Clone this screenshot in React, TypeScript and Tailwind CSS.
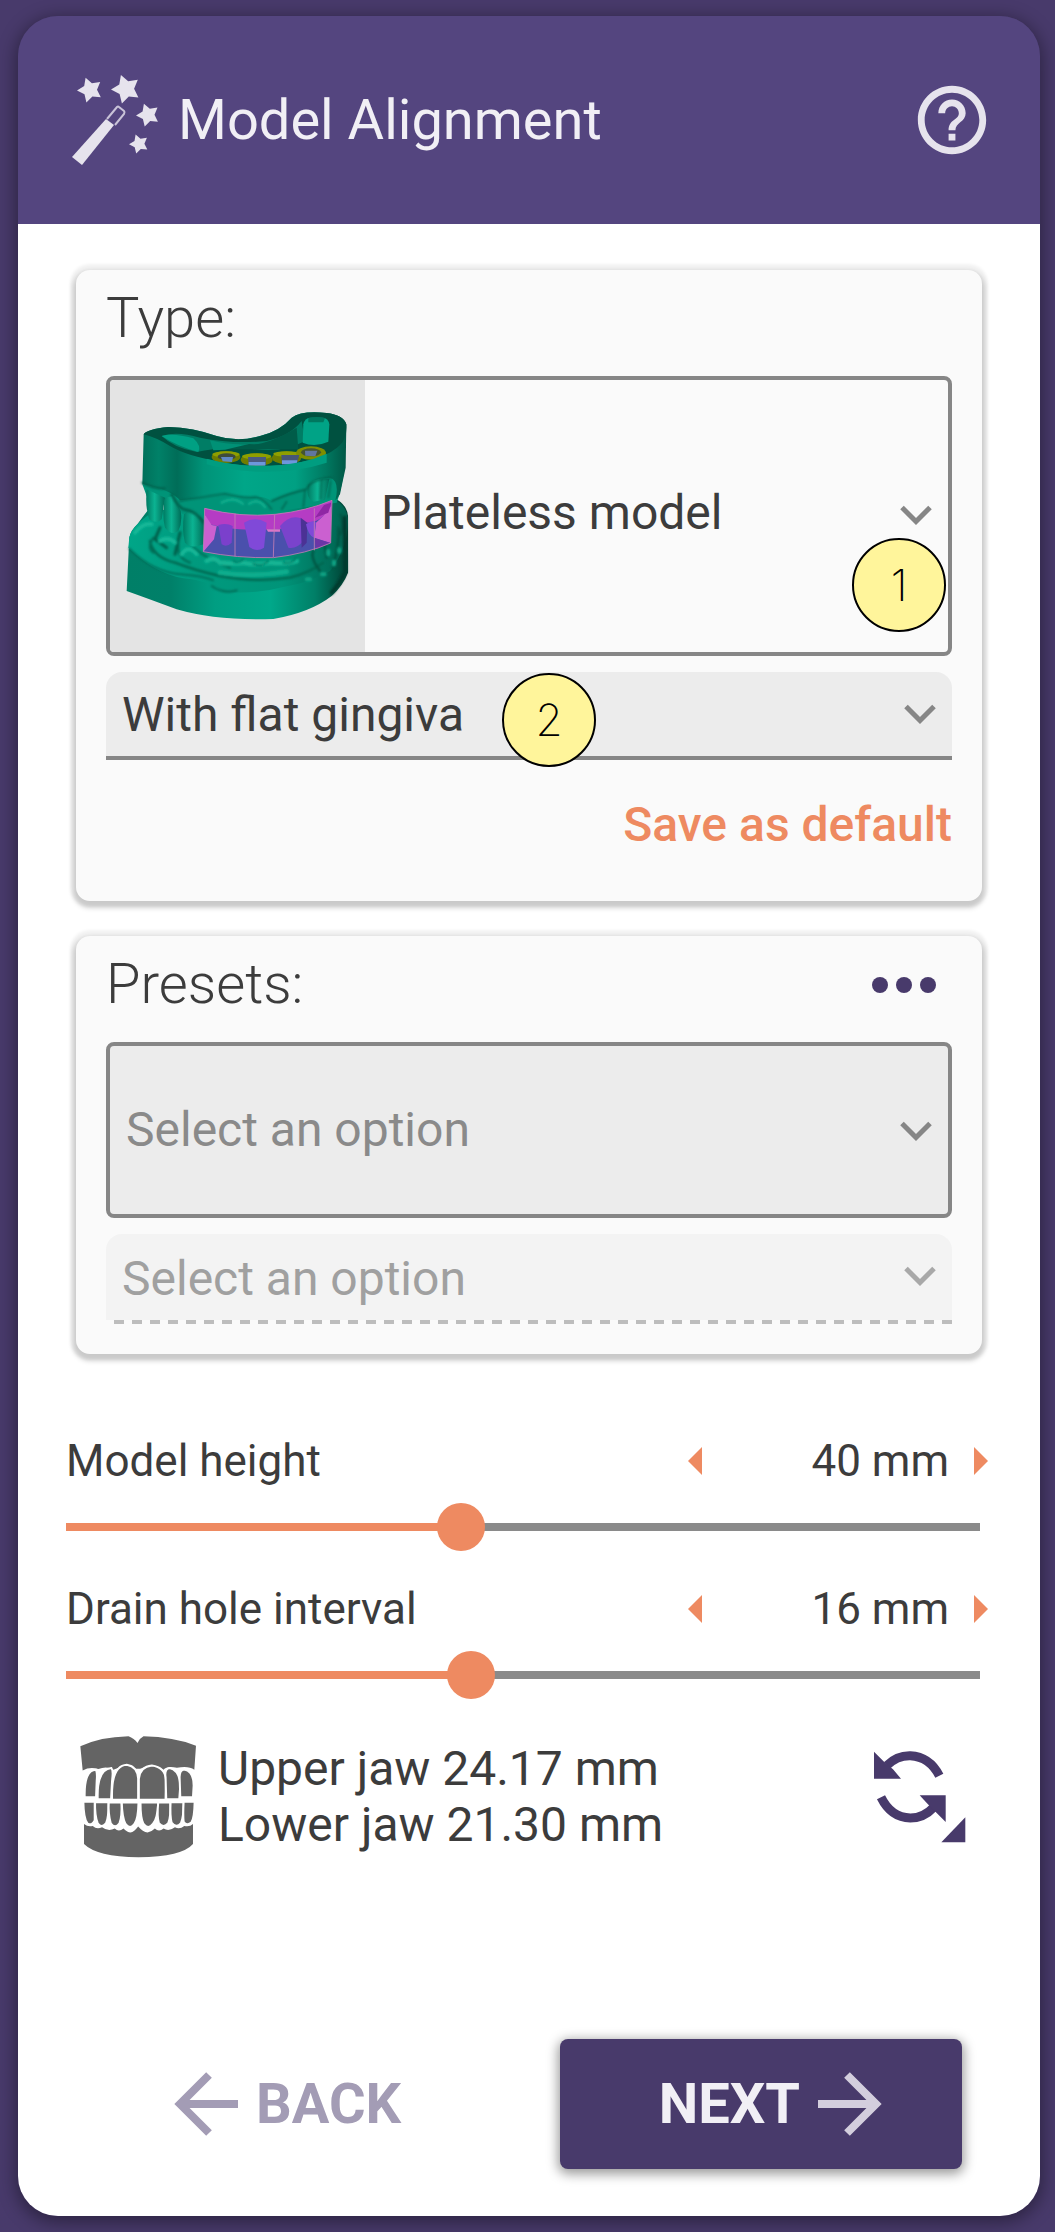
import { useState } from "react";
import type { CSSProperties, ReactNode } from "react";

function star(cx: number, cy: number, r: number, turn = -20) {
  const points: string[] = [];
  for (let i = 0; i < 10; i++) {
    const radius = i % 2 === 0 ? r : r * 0.54;
    const a = ((turn + i * 36 - 90) * Math.PI) / 180;
    points.push(`${(cx + radius * Math.cos(a)).toFixed(1)},${(cy + radius * Math.sin(a)).toFixed(1)}`);
  }
  return points.join(" ");
}

function WandIcon() {
  return (
    <svg viewBox="72 74 88 92" className="h-[92px] w-[88px] shrink-0" fill="#e6e3ed" aria-hidden="true">
      <polygon points={star(90, 90, 13)} />
      <polygon points={star(126, 89, 15)} />
      <polygon points={star(148, 115, 12)} />
      <polygon points={star(139, 144, 10)} />
      <path d="M72 157 L106 119 L114 125 L82 165 Z" />
      <path d="M107 119 L117 107 Q118 106 119 107 L124 111 Q125 112 124 114 L115 125" fill="none" stroke="#c9c3d8" strokeWidth="2" />
    </svg>
  );
}

function HelpIcon() {
  return (
    <svg viewBox="0 0 24 24" className="size-[82px]" fill="#e6e3ed" aria-hidden="true">
      <path d="M11 18h2v-2h-2v2zm1-16C6.48 2 2 6.48 2 12s4.480 10 10 10 10-4.480 10-10S17.520 2 12 2zm0 18c-4.410 0-8-3.590-8-8s3.590-8 8-8 8 3.590 8 8-3.590 8-8 8zm0-14c-2.210 0-4 1.790-4 4h2c0-1.100.9-2 2-2s2 .9 2 2c0 2-3 1.750-3 5h2c0-2.250 3-2.500 3-5 0-2.210-1.790-4-4-4z" />
    </svg>
  );
}

function Chevron({ className }: { className: string }) {
  return (
    <svg
      viewBox="0 0 32 20"
      className={`pointer-events-none absolute h-5 w-8 ${className}`}
      fill="none"
      stroke="currentColor"
      strokeWidth="5"
      aria-hidden="true"
    >
      <path d="M2 2.500 L16 16.500 L30 2.500" />
    </svg>
  );
}

function JawModel() {
  return (
    <svg viewBox="0 -3 765 816" className="h-full w-[255px] shrink-0 bg-[#e4e4e4]" role="img" aria-label="Plateless jaw model">
      <defs>
        <linearGradient id="upper" x1="0" x2="1">
          <stop offset="0" stopColor="#00705a" />
          <stop offset="0.08" stopColor="#008168" />
          <stop offset="0.17" stopColor="#006d58" />
          <stop offset="0.3" stopColor="#009378" />
          <stop offset="0.5" stopColor="#00a688" />
          <stop offset="0.75" stopColor="#00a083" />
          <stop offset="0.9" stopColor="#007961" />
          <stop offset="1" stopColor="#005745" />
        </linearGradient>
        <linearGradient id="lower" x1="0" x2="1">
          <stop offset="0" stopColor="#007f67" />
          <stop offset="0.2" stopColor="#008069" />
          <stop offset="0.4" stopColor="#009e82" />
          <stop offset="0.65" stopColor="#00a88a" />
          <stop offset="0.85" stopColor="#007f67" />
          <stop offset="1" stopColor="#003f32" />
        </linearGradient>
        <linearGradient id="gum" x1="0" x2="1">
          <stop offset="0" stopColor="#00a688" />
          <stop offset="0.3" stopColor="#009a7e" />
          <stop offset="0.7" stopColor="#009479" />
          <stop offset="1" stopColor="#00614e" />
        </linearGradient>
        <linearGradient id="tooth" x1="0" x2="1">
          <stop offset="0" stopColor="#007a62" />
          <stop offset="0.45" stopColor="#0bb392" />
          <stop offset="1" stopColor="#006c57" />
        </linearGradient>
        <filter id="soft" x="-10%" y="-10%" width="120%" height="120%">
          <feGaussianBlur stdDeviation="3" />
        </filter>
      </defs>

      {/* lower jaw */}
      <path d="M58 470 Q62 448 82 430 Q100 405 112 390 L680 355 Q712 375 714 405 L714 575 Q700 612 665 645 Q600 695 490 714 Q320 720 200 685 Q120 655 50 630 Z" fill="url(#lower)" />
      <path d="M58 468 Q64 445 95 418 L130 390 L680 360 Q712 378 714 420 Q712 505 660 570 Q600 605 520 618 Q440 640 340 632 Q300 600 220 592 Q130 575 55 500 Z" fill="url(#gum)" />
      <g filter="url(#soft)" fill="none" strokeLinecap="round">
        <path d="M58 503 Q130 575 215 580 Q280 585 310 598" stroke="#006b56" strokeWidth="5" />
        <path d="M120 480 Q130 530 195 545 Q260 570 330 585 Q440 605 540 590 Q600 575 640 545" stroke="#00664f" strokeWidth="7" />
        <path d="M305 615 Q340 640 380 628" stroke="#006b56" strokeWidth="6" />
        <path d="M205 490 Q200 530 240 545 M130 470 Q110 500 130 515 M250 500 Q300 540 360 560" stroke="#007059" strokeWidth="7" />
        <path d="M150 440 L135 475 L170 500 M210 455 L195 520" stroke="#00604c" strokeWidth="9" />
        <path d="M75 455 Q100 425 125 430 M215 520 Q235 490 260 520 M150 480 Q175 465 195 485" stroke="#14b898" strokeWidth="12" />
        <path d="M290 540 Q310 525 330 545 Q370 550 400 545 Q440 555 480 545 Q530 550 560 540" stroke="#12b594" strokeWidth="14" />
        <path d="M330 575 Q430 590 530 572" stroke="#0eae8e" strokeWidth="14" />
        <path d="M370 540 Q385 550 400 535 M430 548 Q455 560 475 540 M520 545 Q545 550 560 530" stroke="#007860" strokeWidth="5" />
        <path d="M610 510 Q600 530 630 570 M645 495 L650 530 M685 440 Q690 480 668 560 M692 400 Q702 430 692 460" stroke="#005543" strokeWidth="7" />
        <path d="M704 410 L706 570 Q695 600 665 635" stroke="#003a2e" strokeWidth="12" />
        <g stroke="#10a485" strokeWidth="12">
          <path d="M688 505 V512 M672 542 V550 M636 580 H644 M590 595 H600 M655 510 V520" />
        </g>
      </g>

      {/* upper gum and teeth */}
      <path d="M97 310 L700 285 Q690 340 680 365 L440 400 L285 395 L280 430 L110 345 Z" fill="#009478" />
      <path d="M110 325 Q105 380 118 415 Q140 430 155 415 L165 350 Z" fill="url(#tooth)" />
      <path d="M165 350 Q155 400 165 440 Q185 465 205 450 Q218 425 212 390 L190 345 Z" fill="url(#tooth)" />
      <path d="M222 400 Q215 450 225 485 Q245 505 280 490 L284 420 Q265 395 235 390 Z" fill="url(#tooth)" />

      {/* upper base */}
      <path d="M101 160 Q110 145 175 138 Q250 140 320 165 Q385 185 450 165 Q510 150 545 110 Q575 88 650 96 Q700 102 709 130 L707 260 Q698 300 690 340 Q682 352 676 358 Q690 300 660 290 Q600 290 590 325 Q530 335 485 360 Q460 345 435 348 Q390 350 345 337 Q290 352 210 358 Q180 325 97 310 Z" fill="url(#upper)" />
      <path d="M595 310 Q585 350 610 362 L645 356 L658 294 Q615 290 595 310 Z" fill="url(#tooth)" />
      <g filter="url(#soft)" fill="none" stroke="#00604c" strokeLinecap="round">
        <path d="M97 305 Q135 325 165 322" strokeWidth="6" />
        <path d="M185 340 Q205 380 222 385 Q260 390 280 425" strokeWidth="8" />
        <path d="M210 360 Q300 345 345 338 Q400 352 440 348 Q465 358 485 385" strokeWidth="4" />
        <path d="M485 360 Q540 335 590 325 Q600 295 665 290" strokeWidth="5" />
        <path d="M515 385 L530 362 M585 330 L580 378 M635 298 L632 355 M662 300 L655 350" strokeWidth="4" />
        <path d="M335 365 Q370 345 398 368 M418 368 Q445 350 465 378" stroke="#0caf8e" strokeWidth="8" />
      </g>
      <path d="M101 160 Q110 145 175 138 Q250 140 320 165 Q385 185 450 165 Q510 150 545 110 Q575 88 650 96 Q700 102 709 130 Q712 170 690 192 Q650 235 520 252 Q420 262 330 242 Q230 225 180 195 Q140 170 101 160 Z" fill="#005140" />
      <path d="M155 165 Q200 150 270 170 Q370 190 470 180 Q540 165 575 120 L585 180 Q520 215 440 205 Q330 195 260 213 Q190 200 155 165 Z" fill="#007d65" />
      <path d="M155 165 Q190 155 250 172 Q275 195 265 213 Q200 195 155 165 Z" fill="#00a083" />
      <path d="M345 205 Q390 185 430 190 Q480 188 560 140 L565 205 Z" fill="#005c49" />
      <path d="M300 178 Q370 195 420 188 L345 206 L310 208 Z" fill="#009176" />
      <path d="M580 130 Q585 110 600 110 L640 110 Q655 112 658 130 L655 182 Q615 200 578 185 Z" fill="#00a386" />
      <path d="M595 112 Q620 104 645 112 L640 124 L595 124 Z" fill="#00785f" />
      <g>
        <ellipse cx="348" cy="228" rx="43" ry="18" fill="#6f7d00" />
        <ellipse cx="348" cy="220" rx="41" ry="9" fill="#8f9f00" />
        <ellipse cx="350" cy="227" rx="27" ry="10" fill="#3e4c3a" />
        <ellipse cx="530" cy="230" rx="44" ry="19" fill="#6f7d00" />
        <ellipse cx="530" cy="219" rx="40" ry="8" fill="#8f9f00" />
        <ellipse cx="440" cy="236" rx="48" ry="19" fill="#6f7d00" />
        <ellipse cx="440" cy="226" rx="44" ry="9" fill="#8f9f00" />
        <ellipse cx="603" cy="216" rx="45" ry="20" fill="#7f8e00" />
        <ellipse cx="603" cy="214" rx="30" ry="12" fill="#46552e" />
        <path d="M333 228 H369 L366 243 L338 241 Z" fill="#5f88c4" />
        <path d="M414 228 H468 V252 H416 Z" fill="#4a5a82" />
        <path d="M416 243 H466 V254 H416 Z" fill="#6d97dc" />
        <path d="M514 222 H568 L560 250 H516 Z" fill="#465676" />
        <path d="M516 238 H562 L560 250 H516 Z" fill="#6d97dc" />
        <path d="M585 209 H622 L616 226 L586 224 Z" fill="#60769f" />
      </g>
      <path d="M290 233 Q380 258 480 254 Q580 250 650 218 L650 245 Q560 275 440 272 Q350 268 290 250 Z" fill="#009d80" />

      {/* gingiva region */}
      <path d="M284 382 Q390 410 495 400 Q590 390 666 358 L662 486 Q590 518 490 530 Q380 532 280 512 Z" fill="#4a50ac" />
      <path d="M284 382 Q390 410 495 400 Q590 390 666 358 L664 380 L640 405 Q620 425 590 425 Q520 450 450 445 Q370 450 300 430 L284 400 Z" fill="#b53cc4" />
      <path d="M284 400 L305 432 L320 435 L312 475 L280 512 Z" fill="#cb60d0" />
      <path d="M664 375 L640 405 L618 425 L613 470 L662 486 Z" fill="#cb60d0" />
      <path d="M470 445 H510 V452 H474 Z" fill="#dc76c8" />
      <path d="M614 472 L662 486 L618 505 Z" fill="#6b35a6" />
      <path d="M325 432 Q350 425 368 435 L365 485 Q350 500 335 490 Z" fill="#7b40cc" />
      <path d="M402 425 Q435 405 470 425 L462 500 Q440 515 418 498 Z" fill="#8049d8" />
      <path d="M510 435 Q540 400 572 412 L580 480 Q560 505 535 500 Z" fill="#7a43cc" />
      <path d="M572 410 L592 425 L590 485 L575 500 Z" fill="#4b3295" />
      <path d="M588 430 Q610 415 618 425 L612 470 Q595 465 588 430 Z" fill="#8049d8" />
      <path d="M642 372 L664 365 L655 395 L615 410 Z" fill="#8f26a4" />
      <path d="M284 382 Q390 410 495 400 Q590 390 666 358 L662 486 Q590 518 490 530 Q380 532 280 512 Z M375 398 V526 M494 402 L490 528 M613 382 V508" fill="none" stroke="#c77fb4" strokeWidth="3" strokeOpacity="0.8" />
    </svg>
  );
}

function TeethIcon() {
  return (
    <svg viewBox="60 74 350 368" className="h-[123px] w-[117px] shrink-0" fill="#646464" aria-hidden="true">
      <path d="M61 108 Q120 80 205 78 Q222 84 232 98 Q238 84 250 78 Q340 80 407 106 L402 178 Q385 165 350 172 Q320 165 310 178 Q270 160 240 175 L228 175 Q195 160 160 178 Q140 165 115 176 Q90 168 68 180 Z" />
      <path d="M72 340 Q84 350 98 346 Q110 358 126 350 Q144 364 164 354 Q176 366 190 354 Q202 366 211 366 Q222 364 234 348 Q248 364 262 366 Q274 364 284 354 Q296 366 310 354 Q326 364 344 350 Q358 358 372 346 Q388 350 398 340 L398 400 Q365 438 235 440 Q110 438 72 400 Z" />
      <g stroke="#fff" strokeWidth="6">
        <path d="M74 260 Q72 178 108 178 Q112 190 110 210 L108 260 Z" />
        <path d="M113 266 Q110 176 154 173 Q160 180 156 210 L153 266 Z" />
        <path d="M156 268 Q152 166 200 163 Q232 168 234 205 L234 268 Z" />
        <path d="M236 268 L236 205 Q240 168 275 165 Q316 170 317 210 L316 268 Z" />
        <path d="M318 266 L316 200 Q312 176 328 173 Q358 180 360 225 L357 266 Z" />
        <path d="M360 260 L358 200 Q358 178 372 177 Q400 182 400 225 L398 260 Z" />
        <path d="M70 274 H104 L104 330 Q95 347 82 338 Q71 325 70 274 Z" />
        <path d="M105 275 H145 Q146 320 138 338 Q125 354 113 338 Q104 315 105 275 Z" />
        <path d="M146 276 H184 Q186 320 178 338 Q165 356 152 338 Q144 310 146 276 Z" />
        <path d="M185 276 H235 Q234 325 223 340 Q210 358 196 340 Q186 320 185 276 Z" />
        <path d="M241 276 H294 Q292 325 278 340 Q264 358 250 340 Q241 325 241 276 Z" />
        <path d="M294 276 H330 Q332 320 324 338 Q310 354 296 338 Q290 320 294 276 Z" />
        <path d="M331 275 H370 Q370 320 362 338 Q348 354 334 336 Q329 315 331 275 Z" />
        <path d="M370 274 H403 Q402 325 393 336 Q380 347 370 334 Q368 310 370 274 Z" />
      </g>
      <path d="M66 267 Q230 278 406 267" fill="none" stroke="#fff" strokeWidth="7" />
    </svg>
  );
}

function RefreshIcon() {
  return (
    <svg viewBox="943 1050 276 279" className="h-[93px] w-[92px]" fill="#483a6b" aria-hidden="true">
      <path d="M982 1096 Q1012 1066 1052 1067 Q1110 1070 1139 1127" fill="none" stroke="#483a6b" strokeWidth="27" />
      <path d="M943 1055 V1136 H1024 L1000 1108 L976 1088 Z" />
      <path d="M964 1192 Q994 1253 1052 1254 Q1092 1254 1122 1222" fill="none" stroke="#483a6b" strokeWidth="27" />
      <path d="M1080 1186 H1158 V1266 L1128 1236 L1104 1212 Z" />
      <path d="M1217 1252 V1327 H1145 Z" />
    </svg>
  );
}

function Arrow({ flip, color }: { flip?: boolean; color: string }) {
  return (
    <svg viewBox="0 0 64 64" className="size-16" fill="none" stroke={color} strokeWidth="8" aria-hidden="true">
      {flip ? <path d="M64 32 H6 M35 3 L6 32 L35 61" /> : <path d="M0 32 H58 M29 3 L58 32 L29 61" />}
    </svg>
  );
}

function Badge({ children, className }: { children: ReactNode; className: string }) {
  return (
    <span
      className={`absolute flex size-[94px] items-center justify-center rounded-full border-2 border-black bg-[#fff59b] font-[Inter] text-[44px] font-extralight text-black ${className}`}
    >
      {children}
    </span>
  );
}

function Panel({ title, action, children, className }: { title: string; action?: ReactNode; children: ReactNode; className: string }) {
  return (
    <section
      className={`mx-[58px] rounded-[14px] bg-[#fafafa] px-[30px] pt-4 shadow-[0_0_3px_6px_rgba(0,0,0,0.05),0_4px_5px_3px_rgba(0,0,0,0.17)] ${className}`}
    >
      <div className="mb-[25px] flex items-center justify-between">
        <h2 className="text-[56px] leading-[65px] font-light">{title}</h2>
        {action}
      </div>
      {children}
    </section>
  );
}

type SliderProps = { id: string; label: string; min: number; max: number; initial: number };

function SliderField({ id, label, min, max, initial }: SliderProps) {
  const [value, setValue] = useState(initial);
  const ratio = (value - min) / (max - min);
  const fill = { "--fill": `${ratio * 100}%` } as CSSProperties;
  return (
    <div>
      <div className="flex h-14 items-center justify-between">
        <label htmlFor={id} className="text-[44px] leading-[56px]">
          {label}
        </label>
        <div className="flex w-[300px] items-center">
          <button type="button" aria-label={`Decrease ${label}`} onClick={() => setValue(Math.max(min, value - 1))}>
            <svg viewBox="0 0 14 28" className="h-7 w-3.5" fill="#ee8a61" aria-hidden="true">
              <path d="M14 0 V28 L0 14 Z" />
            </svg>
          </button>
          <output htmlFor={id} className="flex-1 pr-[25px] text-right text-[44px] leading-[56px]">
            {value} mm
          </output>
          <button type="button" aria-label={`Increase ${label}`} onClick={() => setValue(Math.min(max, value + 1))}>
            <svg viewBox="0 0 14 28" className="h-7 w-3.5" fill="#ee8a61" aria-hidden="true">
              <path d="M0 0 V28 L14 14 Z" />
            </svg>
          </button>
        </div>
      </div>
      <div className="mt-3.5 pr-2">
        <input
          id={id}
          type="range"
          min={min}
          max={max}
          value={value}
          onChange={(e) => setValue(Number(e.target.value))}
          style={fill}
          className="block h-12 w-full appearance-none bg-transparent [&::-webkit-slider-runnable-track]:h-2 [&::-webkit-slider-runnable-track]:bg-[linear-gradient(to_right,#ee8a61_var(--fill),#8a8a8a_var(--fill))] [&::-webkit-slider-thumb]:-mt-5 [&::-webkit-slider-thumb]:size-12 [&::-webkit-slider-thumb]:appearance-none [&::-webkit-slider-thumb]:rounded-full [&::-webkit-slider-thumb]:bg-[#ee8a61]"
        />
      </div>
    </div>
  );
}

export default function App() {
  return (
    <div className="flex min-h-[calc(100vh-1px)] flex-col bg-[#483a6b] pt-4 pr-[15px] pb-4 pl-[18px] font-[Roboto,sans-serif] text-[#3c3c3c]">
      <main className="flex flex-1 flex-col rounded-[40px] shadow-[0_4px_18px_2px_rgba(0,0,0,0.4)]">
        <header className="flex h-52 items-center rounded-t-[40px] bg-[#54457f] pr-[47px] pl-[54px]">
          <WandIcon />
          <h1 className="ml-[18px] flex-1 text-[56px] text-[#f1eff5]">Model Alignment</h1>
          <button type="button" aria-label="Help">
            <HelpIcon />
          </button>
        </header>

        <div className="flex flex-1 flex-col rounded-b-[40px] bg-white pt-[46px]">
          <Panel title="Type:" className="pb-12">
            <div className="relative flex h-[280px] overflow-hidden rounded-lg border-4 border-[#868686]">
              <JawModel />
              <select aria-label="Model type" className="min-w-0 flex-1 appearance-none bg-transparent pb-1.5 pl-4 text-[48px] outline-none">
                <option>Plateless model</option>
              </select>
              <Chevron className="top-[125px] right-4 text-[#868686]" />
              <Badge className="right-0.5 bottom-5">1</Badge>
            </div>
            <div className="relative mt-4">
              <select
                aria-label="Gingiva"
                className="block h-[88px] w-full appearance-none rounded-t-2xl border-b-4 border-[#868686] bg-[#ececec] pt-0.5 pl-4 text-[48px] outline-none"
              >
                <option>With flat gingiva</option>
              </select>
              <Chevron className="top-8 right-4 text-[#868686]" />
              <Badge className="top-px left-[396px]">2</Badge>
            </div>
            <div className="mt-[37px] flex justify-end">
              <button type="button" className="text-[48px] leading-[56px] font-medium text-[#ee8a61]">
                Save as default
              </button>
            </div>
          </Panel>

          <Panel
            title="Presets:"
            className="mt-[35px] pb-[30px]"
            action={
              <button type="button" aria-label="Preset actions" className="mr-4 flex gap-2">
                <span className="size-4 rounded-full bg-[#483a6b]" />
                <span className="size-4 rounded-full bg-[#483a6b]" />
                <span className="size-4 rounded-full bg-[#483a6b]" />
              </button>
            }
          >
            <div className="relative">
              <select
                aria-label="Preset"
                className="block h-44 w-full appearance-none rounded-lg border-4 border-[#868686] bg-[#ececec] pl-4 text-[48px] text-[#8a8a8a] outline-none"
              >
                <option>Select an option</option>
              </select>
              <Chevron className="top-[79px] right-5 text-[#868686]" />
            </div>
            <div className="relative mt-4">
              <select
                aria-label="Preset variant"
                disabled
                className="block h-[90px] w-full appearance-none rounded-t-2xl bg-[#f3f3f3] pl-4 text-[48px] text-[#a0a0a0] opacity-100 outline-none"
              >
                <option>Select an option</option>
              </select>
              <div className="absolute inset-x-0 bottom-0 h-1 bg-[repeating-linear-gradient(270deg,#bdbdbd_0_10px,#fafafa_10px_18px)]" />
              <Chevron className="top-8 right-4 text-[#a8a8a8]" />
            </div>
          </Panel>

          <div className="mt-[79px] flex flex-col gap-[30px] pr-[52px] pl-12">
            <SliderField id="model-height" label="Model height" min={10} max={80} initial={40} />
            <SliderField id="drain-interval" label="Drain hole interval" min={5} max={30} initial={16} />
          </div>

          <div className="mt-9 flex items-center pr-[74px] pl-[62px]">
            <TeethIcon />
            <p className="ml-[21px] flex-1 text-[48px] leading-[56px]">
              Upper jaw 24.17 mm
              <br />
              Lower jaw 21.30 mm
            </p>
            <button type="button" aria-label="Swap jaws">
              <RefreshIcon />
            </button>
          </div>

          <div className="mt-auto flex items-center justify-between pt-16 pr-[78px] pb-[47px] pl-[156px]">
            <button type="button" className="flex items-center gap-[18px] text-[56px] font-bold text-[#a39cb5]">
              <Arrow flip color="#a39cb5" />
              BACK
            </button>
            <button
              type="button"
              className="flex h-[130px] w-[402px] items-center justify-end gap-[18px] rounded-lg bg-[#483a6b] pr-20 text-[56px] font-bold text-[#f1eff5] shadow-[0_3px_12px_2px_rgba(0,0,0,0.4)]"
            >
              NEXT
              <Arrow color="#d3cedd" />
            </button>
          </div>
        </div>
      </main>
    </div>
  );
}
